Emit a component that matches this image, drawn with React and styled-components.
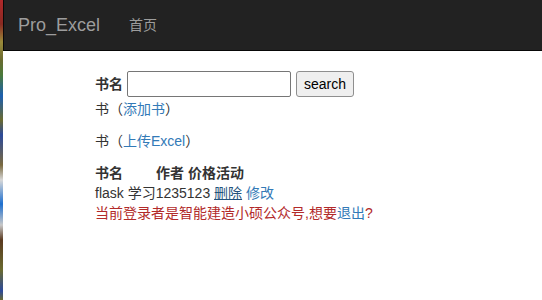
import React from 'react'
import styled, { createGlobalStyle } from 'styled-components'

const GlobalStyle = createGlobalStyle`
  html, body {
    margin: 0;
    padding: 0;
    background: #fff;
  }
  body {
    font-family: "Liberation Sans", "Noto Sans CJK SC", Arial, sans-serif;
    font-size: 14px;
    line-height: 20px;
    color: #333;
  }
`

const Page = styled.div`
  display: flex;
  height: 300px;
  overflow: hidden;
`

const Strip = styled.div`
  width: 3px;
  flex: none;
  background: linear-gradient(
    to bottom,
    #b0282a 0%, #8a2a22 8%, #9a8a3a 14%, #6a6a30 20%,
    #4a7a3a 25%, #1c5fb0 32%, #6a6a30 40%, #2c4a9a 45%,
    #7a6a40 55%, #d8d8d8 60%, #1e6fcf 68%, #c8c8c8 75%,
    #5a3a20 80%, #6a6a30 90%, #2c4a9a 97%, #6a6a30 100%
  );
`

const Main = styled.div`
  flex: 1;
  min-width: 0;
`

const Navbar = styled.nav`
  height: 51px;
  background: #222;
  border-bottom: 1px solid #080808;
  border-left: 1px solid #080808;
  display: flex;
  align-items: center;
  box-sizing: border-box;
  padding-left: 14px;
`

const Brand = styled.a`
  color: #9d9d9d;
  font-size: 18px;
  text-decoration: none;
  margin-right: 29px;
`

const NavLink = styled.a`
  color: #9d9d9d;
  font-size: 14px;
  text-decoration: none;
`

const Content = styled.div`
  padding: 20px 0 0 92px;
`

const SearchForm = styled.form`
  display: flex;
  align-items: center;
  height: 26px;
  margin: 0;
`

const Label = styled.label`
  font-weight: bold;
  margin-right: 4px;
`

const Input = styled.input`
  width: 164px;
  height: 26px;
  box-sizing: border-box;
  border: 1px solid #767676;
  border-radius: 2px;
  padding: 1px 2px;
  margin: 0 5px 0 0;
`

const Button = styled.button`
  height: 26px;
  width: 58px;
  box-sizing: border-box;
  padding: 0;
  border: 1px solid #8f8f8f;
  border-radius: 3px;
  background: #efefef;
  color: #000;
  font-family: "Liberation Sans", Arial, sans-serif;
  font-size: 14px;
`

const Line = styled.div`
  margin-top: ${p => p.$gap || 0}px;
  color: ${p => (p.$danger ? '#b22a2a' : '#333')};
`

const Link = styled.a`
  text-decoration: ${p => (p.$underline ? 'underline' : 'none')};
  color: ${p => (p.$dark ? '#23527c' : '#337ab7')};
`

const Head = styled.div`
  margin-top: 12px;
  font-weight: bold;
  display: flex;
`

const HeadCell = styled.span`
  width: ${p => p.$w || 'auto'};
  margin-right: ${p => p.$mr || 0}px;
`

export default function App() {
  return (
    <>
      <GlobalStyle />
      <Page>
        <Strip />
        <Main>
          <Navbar>
            <Brand href="#">Pro_Excel</Brand>
            <NavLink href="#">首页</NavLink>
          </Navbar>
          <Content>
            <SearchForm onSubmit={e => e.preventDefault()}>
              <Label>书名</Label>
              <Input type="text" />
              <Button type="submit">search</Button>
            </SearchForm>
            <Line $gap={2}>书（<Link href="#">添加书</Link>）</Line>
            <Line $gap={12}>书（<Link href="#">上传Excel</Link>）</Line>
            <Head>
              <HeadCell $w="61px">书名</HeadCell>
              <HeadCell $mr={4}>作者</HeadCell>
              <HeadCell>价格活动</HeadCell>
            </Head>
            <Line>
              flask 学习1235123 <Link href="#" $underline $dark>删除</Link> <Link href="#">修改</Link>
            </Line>
            <Line $danger>
              当前登录者是智能建造小硕公众号,想要<Link href="#">退出</Link>?
            </Line>
          </Content>
        </Main>
      </Page>
    </>
  )
}
